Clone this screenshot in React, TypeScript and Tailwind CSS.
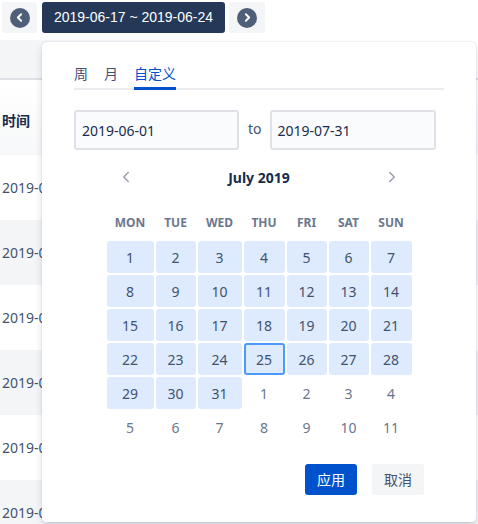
import { ChevronLeft, ChevronRight } from "lucide-react";

const font = { fontFamily: '"Noto Sans", "Noto Sans CJK SC", sans-serif' };

const weekdays = ["MON", "TUE", "WED", "THU", "FRI", "SAT", "SUN"];

// 2019-07 starts on a Monday, 6 rows shown
const days = Array.from({ length: 42 }, (_, i) => {
  const d = i + 1;
  if (d <= 31) return { n: d, inMonth: true };
  return { n: d - 31, inMonth: false };
});

const rows = [0, 1, 2, 3, 4, 5];

function CircleArrow({ dir }: { dir: "left" | "right" }) {
  return (
    <span className="flex h-[20px] w-[20px] items-center justify-center rounded-full bg-[#505f79]">
      {dir === "left" ? (
        <ChevronLeft className="h-[13px] w-[13px] text-white" strokeWidth={3.5} />
      ) : (
        <ChevronRight className="h-[13px] w-[13px] text-white" strokeWidth={3.5} />
      )}
    </span>
  );
}

export default function App() {
  return (
    <div
      className="relative h-[524px] w-[478px] overflow-hidden bg-white text-[#42526e]"
      style={font}
    >
      {/* top bar */}
      <div className="flex items-center px-[2px] pt-[2px]">
        <button className="flex h-[31px] w-[35px] items-center justify-center rounded-[3px] bg-[#f4f5f7]">
          <CircleArrow dir="left" />
        </button>
        <button
          className="ml-[5px] flex h-[31px] w-[183px] items-center justify-center rounded-[3px] bg-[#253858] text-[14px] text-white"
          style={{ fontFamily: '"Liberation Sans", Arial, sans-serif' }}
        >
          2019-06-17 ~ 2019-06-24
        </button>
        <button className="ml-[4px] flex h-[31px] w-[36px] items-center justify-center rounded-[3px] bg-[#f4f5f7]">
          <CircleArrow dir="right" />
        </button>
      </div>

      {/* background table */}
      <div className="mt-[7px] h-[38px] w-[160px] bg-[#f4f5f7]" />
      <div className="flex h-[77px] items-center border-t-2 border-[#dfe1e6] bg-gradient-to-b from-white to-[#f7f8f9] pl-[2px] pt-[6px] text-[14px] font-bold text-[#172b4d]">
        时间
      </div>
      {rows.map((r) => (
        <div
          key={r}
          className={
            r % 2 === 1
              ? "flex h-[65px] items-center bg-[#f4f5f7] pl-[2px] text-[14px]"
              : "flex h-[65px] items-center bg-white pl-[2px] text-[14px]"
          }
        >
          2019-06-17 10:00
        </div>
      ))}

      {/* date picker popover */}
      <div className="absolute left-[42px] top-[42px] flex h-[480px] w-[434px] flex-col rounded-[4px] bg-white px-[32px] shadow-[0_4px_8px_-2px_rgba(9,30,66,0.25),0_0_1px_rgba(9,30,66,0.31)]">
        <div className="mt-[21px] flex border-b-2 border-[#ebecf0] text-[14px]">
          <span className="pb-[4px]">周</span>
          <span className="ml-[16px] pb-[4px]">月</span>
          <span className="relative ml-[16px] pb-[4px] text-[#0052cc]">
            自定义
            <span className="absolute -bottom-[2px] left-0 right-0 h-[3px] bg-[#0052cc]" />
          </span>
        </div>

        <div className="mt-[20px] flex items-center text-[14px]">
          <div className="flex h-[40px] w-[165px] items-center rounded-[3px] border-2 border-[#dfe1e6] bg-[#fafbfc] px-[6px] text-[#172b4d]">
            2019-06-01
          </div>
          <span className="ml-[9px] mb-[3px]">to</span>
          <div className="ml-[8px] flex h-[40px] w-[166px] items-center rounded-[3px] border-2 border-[#dfe1e6] bg-[#fafbfc] px-[6px] text-[#172b4d]">
            2019-07-31
          </div>
        </div>

        <div className="mt-[16px] flex h-[22px] items-center justify-between px-[43px]">
          <ChevronLeft className="h-[18px] w-[18px] text-[#97a0af]" strokeWidth={2} />
          <span className="text-[14px] font-bold text-[#172b4d]">July 2019</span>
          <ChevronRight className="h-[18px] w-[18px] text-[#97a0af]" strokeWidth={2} />
        </div>

        <div className="mx-auto mt-[19px] grid grid-cols-[47px_40px_44px_41px_40px_40px_41px] gap-x-[2px] gap-y-[2px] text-[14px]">
          {weekdays.map((w) => (
            <div
              key={w}
              className="flex h-[32px] items-center justify-center text-[12px] font-bold text-[#6b778c]"
            >
              {w}
            </div>
          ))}
          {days.map((d, i) =>
            d.inMonth ? (
              <div
                key={i}
                className={
                  d.n === 25
                    ? "flex h-[32px] items-center justify-center rounded-[3px] border-2 border-[#4c9aff] bg-[#deebff] text-[#42526e]"
                    : "flex h-[32px] items-center justify-center rounded-[3px] bg-[#deebff] text-[#42526e]"
                }
              >
                {d.n}
              </div>
            ) : (
              <div
                key={i}
                className="flex h-[32px] items-center justify-center text-[#6b778c]"
              >
                {d.n}
              </div>
            )
          )}
        </div>

        <div className="mr-[20px] mt-[21px] flex justify-end gap-[15px] text-[14px]">
          <button className="h-[31px] w-[52px] rounded-[3px] bg-[#0052cc] text-white">
            应用
          </button>
          <button className="h-[31px] w-[52px] rounded-[3px] bg-[#f4f5f7] text-[#42526e]">
            取消
          </button>
        </div>
      </div>
    </div>
  );
}
